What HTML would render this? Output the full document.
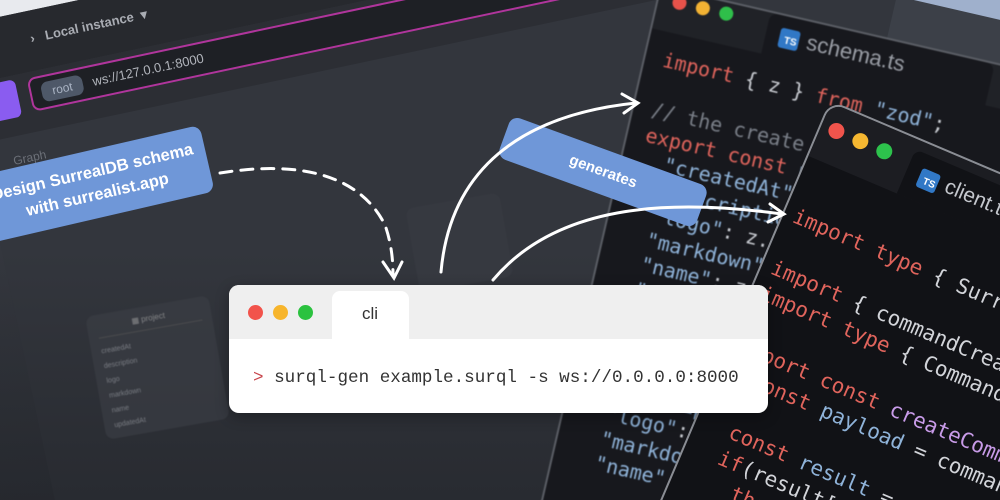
<!DOCTYPE html>
<html style="width:1000px;height:500px;overflow:hidden"><head><meta charset="utf-8"><style>
*{margin:0;padding:0;box-sizing:border-box}
body{width:1000px;height:500px;overflow:hidden;position:relative;background:linear-gradient(160deg,#3a3d44 0%,#32353c 40%,#2a2d33 100%);font-family:"Liberation Sans",sans-serif}
.abs{position:absolute}
.mono{font-family:"DejaVu Sans Mono","Liberation Mono",monospace}
.k{color:#e0645c}.s{color:#8fb3d9}.p{color:#c89be8}.w{color:#d8d8dc}.c{color:#7a7f88}
</style></head><body>
<div class="abs" style="left:0;top:0;width:1000px;height:500px;overflow:hidden">

<!-- left app -->
<div class="abs" style="left:-60px;top:-40px;width:1000px;height:900px;transform:rotate(-12deg);transform-origin:0 0;background:#33363d">
  <div class="abs" style="left:0;top:0;width:1000px;height:68px;background:#e8eaee"></div>
  <div class="abs" style="left:0;top:68px;width:1000px;height:60px;background:#27292e"></div>
  <div class="abs" style="left:0;top:128px;width:1000px;height:60px;background:#2c2e34"></div>
  <div class="abs" style="left:72px;top:88px;color:#a9acb3;font-size:13px;font-weight:bold">›&nbsp;&nbsp; Local instance &nbsp;▾</div>
  <div class="abs" style="left:60px;top:134px;width:900px;height:34px;border:2px solid #b0359c;border-radius:8px;background:#1e2025"></div>
  <div class="abs" style="left:72px;top:141px;width:42px;height:20px;border-radius:7px;background:#4e5868;color:#aab4c4;font-size:12px;text-align:center;line-height:20px">root</div>
  <div class="abs" style="left:124px;top:143px;color:#b0b3ba;font-size:13px">ws://127.0.0.1:8000</div>
  <div class="abs" style="left:14px;top:132px;width:34px;height:38px;border-radius:6px;background:#8a5cf0"></div>
  <div class="abs" style="left:30px;top:205px;color:#6c7078;font-size:12px">Graph</div>
</div>
<div class="abs" style="left:0;top:250px;width:1000px;height:250px;background:linear-gradient(180deg,rgba(0,0,0,0),rgba(20,22,26,.35))"></div>

<!-- faint cards -->
<div class="abs" style="left:95px;top:305px;width:125px;height:125px;background:#3a3d44;border-radius:8px;transform:rotate(-10deg);opacity:.7;filter:blur(.6px)">
 <div style="margin:8px 0 0 45px;color:#aaa;font-size:8px">▦ project</div>
 <div style="margin:6px 10px;height:1px;background:#555"></div>
 <div style="color:#9a9da4;font-size:7px;line-height:15px;padding-left:10px">createdAt<br>description<br>logo<br>markdown<br>name<br>updatedAt</div>
</div>
<div class="abs" style="left:412px;top:200px;width:95px;height:85px;background:#393c43;border-radius:8px;transform:rotate(-10deg);opacity:.6;filter:blur(.6px)"></div>

<!-- right top panels -->
<div class="abs" style="left:880px;top:-20px;width:200px;height:200px;background:#3c4048;transform:rotate(13deg)"></div>
<div class="abs" style="left:905px;top:-60px;width:200px;height:80px;background:#9fb0cc;transform:rotate(13deg)"></div>

<!-- schema window -->
<div class="abs" style="left:660px;top:-15px;width:420px;height:620px;background:#17181d;border:2px solid #5a5d64;border-radius:14px;transform:rotate(13deg);transform-origin:0 0;filter:blur(.5px);overflow:hidden">
  <div class="abs" style="left:0;top:0;width:100%;height:42px;background:#202227"></div>
  <div class="abs" style="left:14px;top:4px;width:14px;height:14px;border-radius:50%;background:#e8524a"></div>
  <div class="abs" style="left:38px;top:4px;width:14px;height:14px;border-radius:50%;background:#f2b233"></div>
  <div class="abs" style="left:62px;top:4px;width:14px;height:14px;border-radius:50%;background:#2fbf4a"></div>
  <div class="abs" style="left:112px;top:0;width:230px;height:42px;background:#17181d;border-radius:8px 8px 0 0"></div>
  <div class="abs" style="left:126px;top:12px;width:20px;height:20px;background:#3178c6;border-radius:3px;color:#fff;font-size:10px;font-weight:bold;text-align:right;padding:7px 2px 0 0">TS</div>
  <div class="abs" style="left:154px;top:8px;color:#9a9ea6;font-size:22px">schema.ts</div>
  <pre class="abs mono" style="left:18px;top:58px;font-size:20px;line-height:25.5px;color:#c9ccd2"><span class="k">import</span> { z } <span class="k">from</span> <span class="s">"zod"</span>;

<span class="c">// the create schema</span>
<span class="k">export const</span> <span class="s">p</span>
  <span class="s">"createdAt"</span>: z.
  <span class="s">"description"</span>:
  <span class="s">"logo"</span>: z.st
  <span class="s">"markdown"</span>:
  <span class="s">"name"</span>: z.st
  <span class="s">"updatedAt"</span>:
});

  <span class="s">"createdA</span>
  <span class="s">"descript</span>
  <span class="s">"logo"</span>: z
  <span class="s">"markdow</span>
  <span class="s">"name"</span></pre>
</div>

<!-- client window -->
<div class="abs" style="left:830px;top:100px;width:460px;height:620px;background:#111216;border:2px solid #8a8d94;border-radius:16px;transform:rotate(23deg);transform-origin:0 0;overflow:hidden">
  <div class="abs" style="left:0;top:0;width:100%;height:58px;background:#1c1d22"></div>
  <div class="abs" style="left:8px;top:16px;width:16px;height:16px;border-radius:50%;background:#f0544c"></div>
  <div class="abs" style="left:34px;top:16px;width:16px;height:16px;border-radius:50%;background:#f5b731"></div>
  <div class="abs" style="left:60px;top:16px;width:16px;height:16px;border-radius:50%;background:#2dc24c"></div>
  <div class="abs" style="left:96px;top:10px;width:260px;height:48px;background:#111216;border-radius:8px 8px 0 0"></div>
  <div class="abs" style="left:110px;top:24px;width:20px;height:20px;background:#3178c6;border-radius:3px;color:#fff;font-size:10px;font-weight:bold;text-align:right;padding:7px 2px 0 0">TS</div>
  <div class="abs" style="left:138px;top:20px;color:#c4c7cd;font-size:21px">client.ts</div>
  <pre class="abs mono" style="left:10px;top:104px;font-size:21px;line-height:28px;color:#d2d4d9"><span class="k">import type</span> { SurrealDB }

<span class="k">import</span> { commandCreate }
<span class="k">import type</span> { Command, Sur

<span class="k">export const</span> <span class="p">createCommand</span>
  <span class="k">const</span> <span class="s">payload</span> = commandCre

  <span class="k">const</span> <span class="s">result</span> = <span class="k">await</span> db
  <span class="k">if</span>(result[0].
    <span class="k">throw</span></pre>
</div>

<!-- labels -->
<div class="abs" style="left:-20px;top:150px;width:230px;height:68px;background:#6f97d8;border-radius:9px;transform:rotate(-13deg);color:#fff;font-weight:bold;font-size:16.5px;text-align:center;line-height:23px;padding-top:11px">Design SurrealDB schema<br>with surrealist.app</div>
<div class="abs" style="left:498px;top:150px;width:210px;height:44px;background:#6f97d8;border-radius:9px;transform:rotate(20deg);color:#fff;font-weight:bold;font-size:15px;text-align:center;line-height:44px">generates</div>

<!-- arrows -->
<svg class="abs" style="left:0;top:0" width="1000" height="500" fill="none" stroke="#fff" stroke-width="3" stroke-linecap="round">
  <path d="M220 173 C300 160 360 175 385 225 C392 245 393 262 393 276" stroke-dasharray="12 9"/>
  <path d="M383 262 L394 278 L402 262"/>
  <path d="M441 272 C450 170 520 115 636 103"/>
  <path d="M622 94 L638 103 L624 113"/>
  <path d="M493 280 C560 200 680 200 782 214"/>
  <path d="M770 204 L784 214 L768 222"/>
</svg>

<!-- cli window -->
<div class="abs" style="left:229px;top:285px;width:539px;height:128px;background:#fff;border-radius:10px;overflow:hidden;box-shadow:0 4px 14px rgba(0,0,0,.3)">
  <div class="abs" style="left:0;top:0;width:100%;height:54px;background:#efefef"></div>
  <div class="abs" style="left:103px;top:6px;width:77px;height:50px;background:#fff;border-radius:8px 8px 0 0"></div>
  <div class="abs" style="left:19px;top:20px;width:15px;height:15px;border-radius:50%;background:#f2534b"></div>
  <div class="abs" style="left:44px;top:20px;width:15px;height:15px;border-radius:50%;background:#f7b52c"></div>
  <div class="abs" style="left:69px;top:20px;width:15px;height:15px;border-radius:50%;background:#2bc23f"></div>
  <div class="abs" style="left:133px;top:19px;color:#333;font-size:17px">cli</div>
  <div class="abs" style="left:24px;top:83px;font-family:'Liberation Mono',monospace;font-size:17.6px;color:#333;white-space:pre"><span style="color:#c7444b">&gt;</span> surql-gen example.surql -s ws://0.0.0.0:8000</div>
</div>
</div>
</body></html>
